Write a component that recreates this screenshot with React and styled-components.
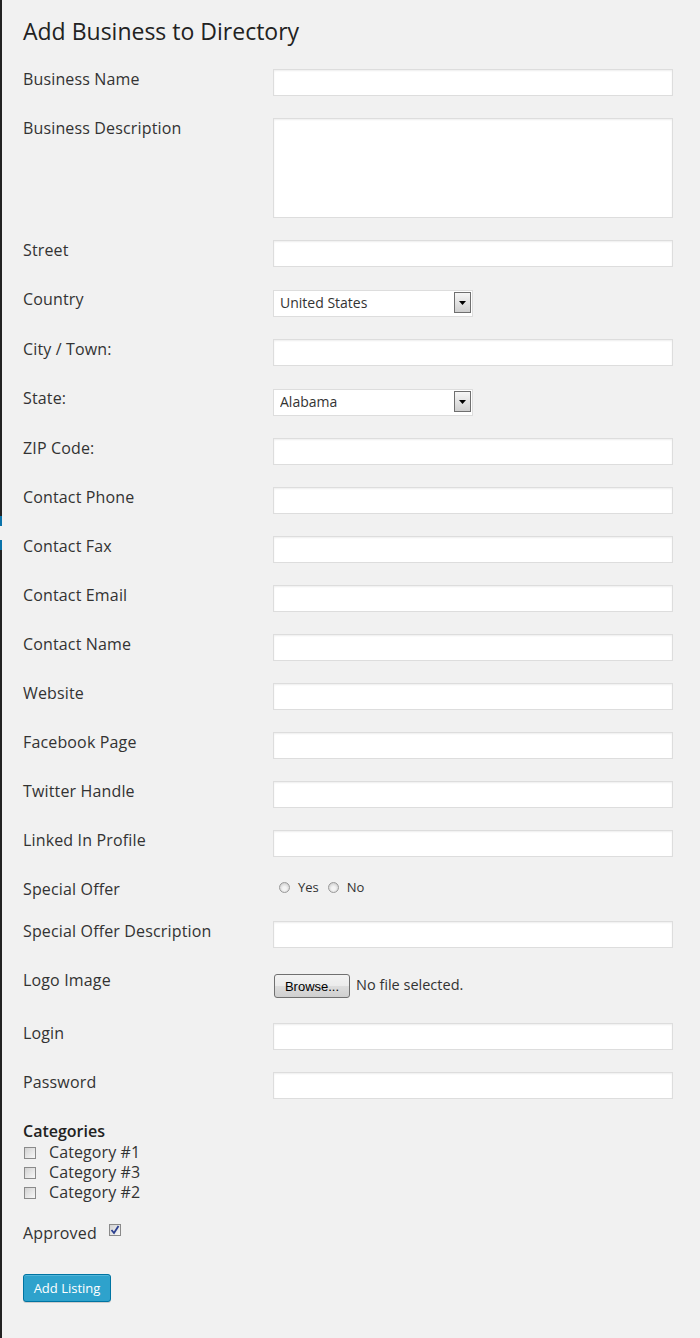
import React from 'react';
import styled, { createGlobalStyle } from 'styled-components';

const GlobalStyle = createGlobalStyle`
  html, body { margin: 0; padding: 0; background: #f1f1f1; }
  body { font-family: "Open Sans", "Noto Sans", sans-serif; color: #333; }
  * { box-sizing: border-box; }
`;

const Page = styled.div`
  position: relative;
  min-height: 1338px;
  border-left: 2px solid #222;
  padding: 17px 0 0 21px;
  &::before {
    content: "";
    position: absolute;
    left: -2px;
    top: 516px;
    width: 2px;
    height: 34px;
    background: linear-gradient(#0a73aa 0 10px, #f1f1f1 10px 24px, #0a73aa 24px 34px);
  }
`;

const Title = styled.h1`
  margin: 0 0 23px;
  font-size: 23px;
  line-height: 29px;
  font-weight: 400;
  color: #222;
`;

const FormGrid = styled.div`
  display: grid;
  grid-template-columns: 250px 400px;
  row-gap: 22px;
  align-items: start;
`;

const Label = styled.label`
  font-size: 16px;
  line-height: 20px;
  letter-spacing: 0.15px;
  color: #333;
`;

const TextInput = styled.input`
  display: block;
  width: 400px;
  height: 27px;
  margin: 0;
  padding: 3px 5px;
  border: 1px solid #ddd;
  background: #fff;
  box-shadow: inset 0 1px 2px rgba(0, 0, 0, 0.07);
  font: 14px "Open Sans", sans-serif;
  outline: none;
`;

const TextArea = styled.textarea`
  display: block;
  width: 400px;
  height: 100px;
  margin: 0;
  padding: 3px 5px;
  border: 1px solid #ddd;
  background: #fff;
  box-shadow: inset 0 1px 2px rgba(0, 0, 0, 0.07);
  resize: none;
  font: 14px "Open Sans", sans-serif;
  outline: none;
`;

const SelectWrap = styled.div`
  position: relative;
  width: 200px;
  height: 27px;
  margin-top: 1px;
`;

const Select = styled.select`
  appearance: none;
  -webkit-appearance: none;
  width: 100%;
  height: 100%;
  margin: 0;
  padding: 0 24px 2px 6px;
  border: 1px solid #ddd;
  border-radius: 0;
  background: #fff;
  color: #333;
  font: 14px "Open Sans", sans-serif;
  outline: none;
`;

const SelectArrow = styled.span`
  position: absolute;
  top: 2px;
  right: 2px;
  width: 17px;
  height: 21px;
  border: 1px solid #6f6f6f;
  background: linear-gradient(#f6f6f6, #cfcfcf);
  display: flex;
  align-items: center;
  justify-content: center;
  pointer-events: none;
`;

const RadioGroup = styled.div`
  display: flex;
  align-items: center;
  height: 16px;
  padding-left: 6px;
  gap: 9px;
`;

const RadioOption = styled.label`
  display: flex;
  align-items: center;
  gap: 8px;
  font-size: 13px;
  color: #333;
`;

const RadioDot = styled.span`
  display: inline-block;
  width: 11px;
  height: 11px;
  border-radius: 50%;
  border: 1px solid #9a9a9a;
  background: radial-gradient(circle at 50% 60%, #f4f4f4 0 25%, #cfcfcf 80%);
`;

const FileRow = styled.div`
  display: flex;
  align-items: center;
  gap: 6px;
  height: 31px;
  padding-top: 4px;
  align-self: start;
`;

const BrowseButton = styled.button`
  width: 76px;
  height: 24px;
  margin: 0 0 auto 1px;
  padding: 0;
  border: 1px solid #707070;
  border-radius: 3px;
  background: linear-gradient(#f3f3f3 0%, #ebebeb 50%, #dddddd 51%, #cfcfcf 100%);
  color: #000;
  font: 13px "Liberation Sans", Arial, sans-serif;
`;

const FileStatus = styled.span`
  font-size: 14.5px;
  color: #333;
  margin-top: -7px;
`;

const Categories = styled.div`
  margin-top: 22px;
`;

const SectionTitle = styled.div`
  font-size: 16px;
  line-height: 20px;
  font-weight: 600;
  color: #222;
`;

const CategoryList = styled.div`
  margin-top: 1px;
  display: flex;
  flex-direction: column;
`;

const CheckRow = styled.label`
  display: flex;
  align-items: flex-start;
  font-size: 16px;
  line-height: 20px;
  letter-spacing: 0.1px;
  color: #333;
`;

const Box = styled.span`
  display: inline-flex;
  align-items: center;
  justify-content: center;
  width: 12px;
  height: 12px;
  margin: ${p => p.$inline ? '1px 0 0 12px' : '5px 13px 0 1px'};
  border: 1px solid #8a8a8a;
  background: linear-gradient(135deg, #d2d2d2, #f7f7f7);
`;

const ApprovedRow = styled.div`
  display: flex;
  align-items: flex-start;
  margin-top: 21px;
  font-size: 16px;
  line-height: 20px;
  letter-spacing: 0.15px;
  color: #333;
`;

const PrimaryButton = styled.button`
  display: block;
  margin-top: 31px;
  width: 88px;
  height: 28px;
  padding: 0;
  border: 1px solid #0074a2;
  border-radius: 3px;
  background: #2ea2cc;
  color: #fff;
  text-align: center;
  font: 13px/26px "Open Sans", sans-serif;
  box-shadow: inset 0 1px 0 rgba(120, 200, 230, 0.5), 0 1px 0 rgba(0, 0, 0, 0.15);
`;

function Checkbox({ checked, inline }) {
  return (
    <Box $inline={inline}>
      {checked && (
        <svg width="10" height="10" viewBox="0 0 10 10">
          <path d="M1.5 5 L4 8 L8.5 1" fill="none" stroke="#2b3f8f" strokeWidth="1.8" />
        </svg>
      )}
    </Box>
  );
}

function FakeSelect({ value }) {
  return (
    <SelectWrap>
      <Select defaultValue={value}>
        <option>{value}</option>
      </Select>
      <SelectArrow>
        <svg width="7" height="4" viewBox="0 0 7 4">
          <polygon points="0,0 7,0 3.5,4" fill="#000" />
        </svg>
      </SelectArrow>
    </SelectWrap>
  );
}

const textFieldsB = ['ZIP Code:', 'Contact Phone', 'Contact Fax', 'Contact Email', 'Contact Name', 'Website', 'Facebook Page', 'Twitter Handle', 'Linked In Profile'];

export default function App() {
  return (
    <>
      <GlobalStyle />
      <Page>
        <Title>Add Business to Directory</Title>
        <FormGrid>
          <Label>Business Name</Label>
          <TextInput type="text" />
          <Label>Business Description</Label>
          <TextArea />
          <Label>Street</Label>
          <TextInput type="text" />
          <Label>Country</Label>
          <FakeSelect value="United States" />
          <Label>City / Town:</Label>
          <TextInput type="text" />
          <Label>State:</Label>
          <FakeSelect value="Alabama" />
          {textFieldsB.map(l => (
            <React.Fragment key={l}>
              <Label>{l}</Label>
              <TextInput type="text" />
            </React.Fragment>
          ))}
          <Label>Special Offer</Label>
          <RadioGroup>
            <RadioOption><RadioDot />Yes</RadioOption>
            <RadioOption><RadioDot />No</RadioOption>
          </RadioGroup>
          <Label>Special Offer Description</Label>
          <TextInput type="text" />
          <Label>Logo Image</Label>
          <FileRow>
            <BrowseButton type="button">Browse...</BrowseButton>
            <FileStatus>No file selected.</FileStatus>
          </FileRow>
          <Label>Login</Label>
          <TextInput type="text" />
          <Label>Password</Label>
          <TextInput type="password" />
        </FormGrid>
        <Categories>
          <SectionTitle>Categories</SectionTitle>
          <CategoryList>
            <CheckRow><Checkbox />Category #1</CheckRow>
            <CheckRow><Checkbox />Category #3</CheckRow>
            <CheckRow><Checkbox />Category #2</CheckRow>
          </CategoryList>
        </Categories>
        <ApprovedRow>
          Approved
          <Checkbox checked inline />
        </ApprovedRow>
        <PrimaryButton type="button">Add Listing</PrimaryButton>
      </Page>
    </>
  );
}
